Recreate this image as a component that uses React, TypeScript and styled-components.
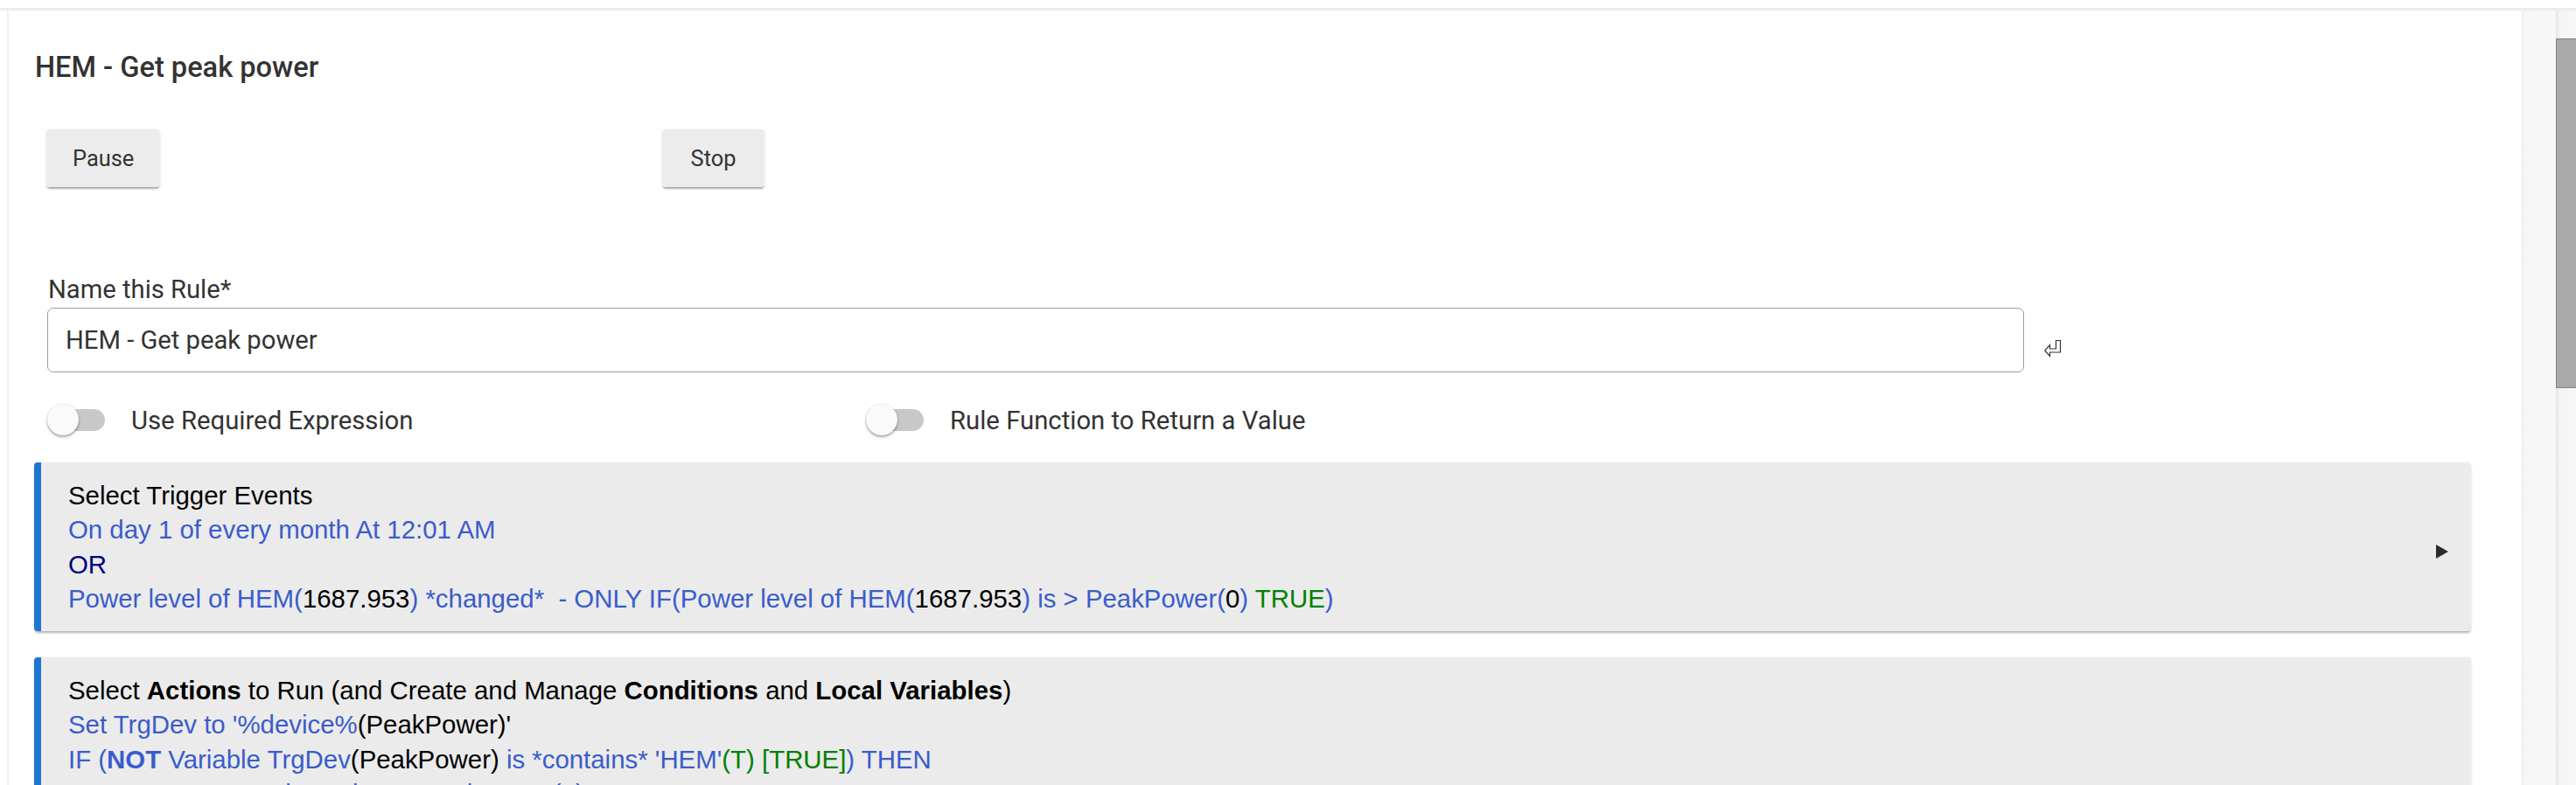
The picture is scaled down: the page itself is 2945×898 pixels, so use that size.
import React from "react";
import styled, { createGlobalStyle } from "styled-components";

const GlobalStyle = createGlobalStyle`
  html, body {
    margin: 0;
    padding: 0;
    overflow: hidden;
    background: #ffffff;
  }
  body {
    font-family: Roboto, "Noto Sans", sans-serif;
  }
`;

const Window = styled.div`
  width: 2945px;
  height: 898px;
  display: flex;
  flex-direction: column;
  background: #fff;
`;

const TopGap = styled.div`
  height: 9px;
  flex: 0 0 9px;
`;

const Body = styled.div`
  flex: 1;
  display: flex;
  border-top: 3px solid #ececf3;
  padding-left: 8px;
  min-height: 0;
`;

const Main = styled.div`
  box-sizing: border-box;
  flex: 0 0 2875px;
  border-left: 2px solid #efefef;
  padding-left: 29px;
  overflow: hidden;
`;

const Gutter = styled.div`
  flex: 0 0 39px;
  background: linear-gradient(to right, #e9e9e9 0, #f6f6f6 3px, #f8f8f8 100%);
`;

const ScrollTrack = styled.div`
  flex: 1;
  padding-top: 32px;
  background: linear-gradient(to right, #e4e4e4 0, #f4f4f4 4px, #f7f7f7 100%);
`;

const ScrollThumb = styled.div`
  height: 400px;
  background: #aaaaaa;
  border: 1px solid #76808e;
  border-right: none;
  box-sizing: border-box;
`;

const Title = styled.div`
  margin-top: 46px;
  margin-left: 1px;
  font-size: 32.6px;
  line-height: 38px;
  font-weight: 500;
  color: #333;
`;

const ButtonRow = styled.div`
  margin-top: 52px;
  margin-left: 14px;
  display: grid;
  grid-template-columns: 704px 704px;
  align-items: start;
`;

const Button = styled.button`
  justify-self: start;
  height: 66px;
  min-width: 117px;
  padding: 0 30px;
  border: none;
  border-radius: 4px;
  background: #ececec;
  color: #333;
  font-family: Roboto, sans-serif;
  font-size: 25.4px;
  box-shadow: 0 3px 2px -1px rgba(0, 0, 0, 0.3), 0 1px 4px rgba(0, 0, 0, 0.08);
`;

const FieldLabel = styled.div`
  margin-top: 100px;
  margin-left: 16px;
  font-size: 29.2px;
  line-height: 34px;
  color: #333;
`;

const InputRow = styled.div`
  margin-top: 4px;
  margin-left: 15px;
  display: flex;
  align-items: center;
`;

const TextInput = styled.input`
  box-sizing: border-box;
  width: 2260px;
  height: 74px;
  border: 1.5px solid #9c9c9c;
  border-radius: 7px;
  padding: 0 20px;
  font-family: Roboto, sans-serif;
  font-size: 29.2px;
  color: #333;
  background: #fff;
  outline: none;
`;

const ReturnMark = styled.svg`
  margin-left: 23px;
  margin-top: 20px;
  flex: none;
`;

const ToggleRow = styled.div`
  margin-top: 36px;
  margin-left: 15px;
  display: grid;
  grid-template-columns: 936px 936px 936px;
`;

const ToggleItem = styled.div`
  display: flex;
  align-items: center;
  height: 36px;
  gap: 30px;
`;

const Switch = styled.div`
  position: relative;
  width: 66px;
  height: 36px;
  flex: none;
`;

const Track = styled.div`
  position: absolute;
  left: 3px;
  top: 6px;
  width: 63px;
  height: 25px;
  border-radius: 13px;
  background: #c8c8c8;
`;

const Thumb = styled.div`
  position: absolute;
  left: 0;
  top: 0;
  width: 36px;
  height: 36px;
  border-radius: 50%;
  background: #fafafa;
  box-shadow: 0 2px 3px rgba(0, 0, 0, 0.35), 0 0 1px rgba(0, 0, 0, 0.2);
`;

const ToggleLabel = styled.span`
  font-size: 29.3px;
  color: #333;
  padding-top: 2px;
`;

const Panel = styled.div<{ $gap: number }>`
  box-sizing: border-box;
  margin-top: ${(p) => p.$gap}px;
  width: 2786px;
  display: flex;
  align-items: center;
  background: #ebebeb;
  border-left: 8px solid #1c76cf;
  border-radius: 4px;
  box-shadow: 0 3px 3px -1px rgba(0, 0, 0, 0.3), 0 0 3px rgba(0, 0, 0, 0.06);
  padding: 18px 26px 18px 31px;
`;

const PanelText = styled.div`
  flex: 1;
  font-family: "Liberation Sans", Arial, sans-serif;
  font-size: 29.4px;
  line-height: 39.3px;
  color: #000;
  white-space: pre;
`;

const Line = styled.div<{ $indent?: number }>`
  padding-left: ${(p) => p.$indent || 0}px;
`;

const Blue = styled.span`
  color: #3a5ccc;
`;

const Navy = styled.span`
  color: #000080;
`;

const Green = styled.span`
  color: #008000;
`;

const Dark = styled.span`
  color: #000;
`;

const Arrow = styled.div`
  width: 0;
  height: 0;
  margin-top: 10px;
  border-top: 8px solid transparent;
  border-bottom: 8px solid transparent;
  border-left: 14px solid #2b2b2b;
`;

export default function App() {
  return (
    <>
      <GlobalStyle />
      <Window>
        <TopGap />
        <Body>
          <Main>
            <Title>HEM - Get peak power</Title>
            <ButtonRow>
              <Button>Pause</Button>
              <Button>Stop</Button>
            </ButtonRow>
            <FieldLabel>Name this Rule*</FieldLabel>
            <InputRow>
              <TextInput defaultValue="HEM - Get peak power" />
              <ReturnMark width="20" height="20" viewBox="0 0 20 20">
                <polygon
                  points="13.5,0.5 18.5,0.5 18.5,14 6.5,14 6.5,18.5 0.8,12 6.5,5.5 6.5,10 13.5,10"
                  fill="none"
                  stroke="#333"
                  strokeWidth="1.2"
                />
              </ReturnMark>
            </InputRow>
            <ToggleRow>
              <ToggleItem>
                <Switch>
                  <Track />
                  <Thumb />
                </Switch>
                <ToggleLabel>Use Required Expression</ToggleLabel>
              </ToggleItem>
              <ToggleItem>
                <Switch>
                  <Track />
                  <Thumb />
                </Switch>
                <ToggleLabel>Rule Function to Return a Value</ToggleLabel>
              </ToggleItem>
            </ToggleRow>

            <Panel $gap={31}>
              <PanelText>
                <Line>Select Trigger Events</Line>
                <Line>
                  <Blue>On day 1 of every month At 12:01 AM</Blue>
                </Line>
                <Line>
                  <Navy>OR</Navy>
                </Line>
                <Line>
                  <Blue>Power level of HEM(</Blue>
                  <Dark>1687.953</Dark>
                  <Blue>) *changed*  - ONLY IF(Power level of HEM(</Blue>
                  <Dark>1687.953</Dark>
                  <Blue>) is &gt; PeakPower(</Blue>
                  <Dark>0</Dark>
                  <Blue>) </Blue>
                  <Green>TRUE</Green>
                  <Blue>)</Blue>
                </Line>
              </PanelText>
              <Arrow />
            </Panel>

            <Panel $gap={30}>
              <PanelText>
                <Line>
                  Select <b>Actions</b> to Run (and Create and Manage <b>Conditions</b> and{" "}
                  <b>Local Variables</b>)
                </Line>
                <Line>
                  <Blue>Set TrgDev to '%device%</Blue>
                  <Dark>(PeakPower)'</Dark>
                </Line>
                <Line>
                  <Blue>
                    IF (<b>NOT</b> Variable TrgDev
                  </Blue>
                  <Dark>(PeakPower)</Dark>
                  <Blue> is *contains* 'HEM'</Blue>
                  <Green>(T) [TRUE]</Green>
                  <Blue>) THEN</Blue>
                </Line>
                <Line $indent={67}>
                  <Blue>Set Last Month Device to PeakPower(</Blue>
                  <Dark>0</Dark>
                  <Blue>)</Blue>
                </Line>
                <Line $indent={67}>
                  <Blue>END-IF</Blue>
                </Line>
              </PanelText>
            </Panel>
          </Main>
          <Gutter />
          <ScrollTrack>
            <ScrollThumb />
          </ScrollTrack>
        </Body>
      </Window>
    </>
  );
}
